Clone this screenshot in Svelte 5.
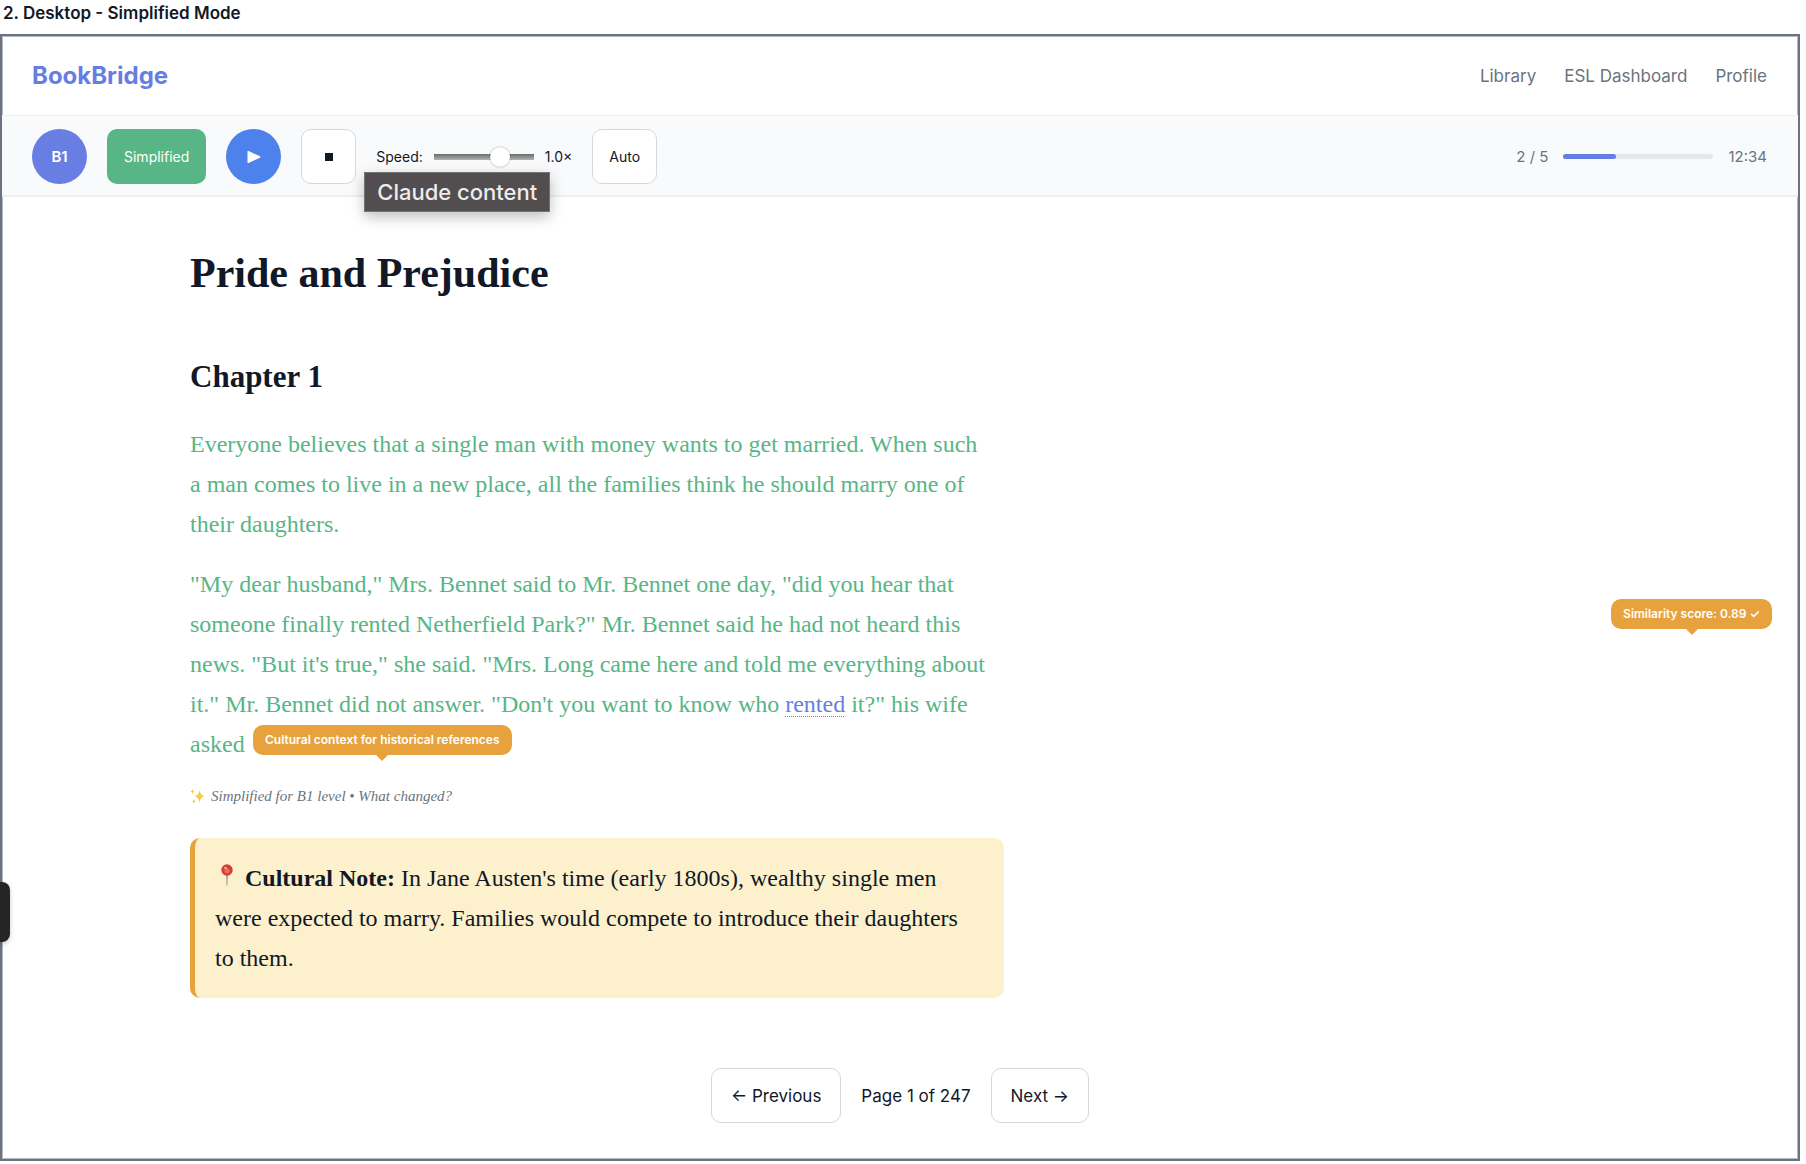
<script>
  let speed = $state(70);
  const progress = 35;
  const links = ['Library', 'ESL Dashboard', 'Profile'];
</script>

<main>
  <h2 class="caption">2. Desktop - Simplified Mode</h2>

  <div class="frame">
    <header>
      <div class="logo">BookBridge</div>
      <nav>
        {#each links as link}
          <a href="#{link}">{link}</a>
        {/each}
      </nav>
    </header>

    <div class="toolbar">
      <button class="round level">B1</button>
      <button class="mode">Simplified</button>
      <button class="round play" aria-label="Play">
        <svg width="14" height="14" viewBox="0 0 14 14"><path d="M.5 1.6v10.8q0 1 1 .6l11.500-5.300q1-.7 0-1.400L1.500 1Q.5.600.5 1.600z" fill="#fff" /></svg>
      </button>
      <button class="plain stop" aria-label="Stop">
        <svg width="8" height="8" viewBox="0 0 8 8"><rect width="8" height="8" fill="#111827" /></svg>
      </button>
      <div class="speed">
        <label for="speed">Speed:</label>
        <input id="speed" type="range" min="0" max="100" bind:value={speed} />
        <span>1.0×</span>
        <div class="hint" role="tooltip">Claude content</div>
      </div>
      <button class="plain auto">Auto</button>
      <div class="status">
        <span>2 / 5</span>
        <div class="track"><div class="fill" style="width: {progress}%"></div></div>
        <span>12:34</span>
      </div>
    </div>

    <div class="content">
      <article>
        <h1>Pride and Prejudice</h1>
        <h2>Chapter 1</h2>
        <p>
          Everyone believes that a single man with money wants to get married. When such<br />
          a man comes to live in a new place, all the families think he should marry one of<br />
          their daughters.
        </p>
        <p>
          "My dear husband," Mrs. Bennet said to Mr. Bennet one day, "did you hear that<br />
          someone finally rented Netherfield Park?" Mr. Bennet said he had not heard this<br />
          news. "But it's true," she said. "Mrs. Long came here and told me everything about<br />
          it." Mr. Bennet did not answer. "Don't you want to know who <span class="word">rented</span> it?" his wife<br />
          <span class="anchor">asked <span class="tip context">Cultural context for historical references</span></span>
        </p>
        <div class="meta">
          <svg width="15" height="15" viewBox="0 0 15 15" fill="#f8c94e">
            <path d="M9.500 1q.7 5.300 5 6.300-4.300 1-5 6.300-.7-5.300-5-6.300 4.300-1 5-6.300z" />
            <path d="M2.500 0q.3 2.200 2 2.600-1.700.4-2 2.600-.3-2.200-2-2.600 1.700-.4 2-2.600z" />
            <path d="M4 10q.3 2 1.800 2.400-1.500.4-1.800 2.400-.3-2-1.800-2.400Q3.700 12 4 10z" />
          </svg>
          <span>Simplified for B1 level • What changed?</span>
        </div>
        <aside>
          <svg width="24" height="24" viewBox="0 0 24 24">
            <path d="M11.300 11h1.400l-.4 12.500h-.6z" fill="#7d7f80" />
            <circle cx="12" cy="8" r="5.700" fill="#d63c36" />
            <circle cx="12" cy="8.800" r="2.600" fill="#ee6a61" />
            <ellipse cx="10.500" cy="6" rx="1.600" ry="1.100" fill="#f5aaa2" />
          </svg>
          <strong>Cultural Note:</strong> In Jane Austen's time (early 1800s), wealthy single men<br />
          were expected to marry. Families would compete to introduce their daughters<br />
          to them.
        </aside>
      </article>
    </div>

    <footer>
      <button class="plain page">← Previous</button>
      <span>Page 1 of 247</span>
      <button class="plain page">Next →</button>
    </footer>

    <div class="tip score">Similarity score: 0.89 ✓</div>
    <div class="drawer"></div>
  </div>
</main>

<style>
  :global(body) {
    margin: 0;
    background: #fff;
  }
  main {
    padding: 0 6px 5px 0;
    font-family: Inter, 'Liberation Sans', sans-serif;
    color: #111827;
  }
  .caption {
    margin: 0;
    padding: 0 3px 8px;
    font-size: 17px;
    line-height: 26px;
    font-weight: 600;
  }
  .frame {
    position: relative;
    border: 2px solid #6b7280;
    box-shadow: inset 0 0 0 1px #b5b9c1;
  }
  header {
    display: flex;
    align-items: center;
    justify-content: space-between;
    padding: 20px 31px 19px 30px;
  }
  .logo {
    font-size: 24px;
    line-height: 40px;
    font-weight: 700;
    color: #667ee3;
  }
  nav {
    display: flex;
    gap: 28px;
  }
  nav a {
    font-size: 17px;
    color: #6b7280;
    text-decoration: none;
  }
  .toolbar {
    display: flex;
    align-items: center;
    gap: 20px;
    padding: 13px 31px 11px 30px;
    background: #f9fafc;
    border-top: 1px solid #eceef1;
    border-bottom: 2px solid #eceef1;
    font-size: 14px;
  }
  button {
    display: flex;
    align-items: center;
    justify-content: center;
    box-sizing: border-box;
    height: 55px;
    padding: 0;
    border: 0;
    border-radius: 10px;
    font: inherit;
    color: inherit;
  }
  .round {
    width: 55px;
    border-radius: 50%;
    color: #fff;
  }
  .level {
    background: #687ee2;
    font-size: 15px;
    font-weight: 600;
  }
  .mode {
    padding: 0 17px;
    background: #57b586;
    color: #fff;
  }
  .play {
    background: #4d82ec;
  }
  .plain {
    background: #fff;
    border: 1px solid #d5d8dd;
  }
  .stop {
    width: 55px;
  }
  .auto {
    padding: 0 16px;
  }
  .speed {
    position: relative;
    display: flex;
    align-items: center;
    gap: 11px;
  }
  input {
    appearance: none;
    width: 100px;
    height: 6px;
    margin: 0;
    background: linear-gradient(#6a6e6b, #b1b4b3);
  }
  input::-webkit-slider-thumb {
    appearance: none;
    width: 20px;
    height: 20px;
    border-radius: 50%;
    background: #fff;
    box-shadow: 0 0 2px rgba(0, 0, 0, 0.4);
  }
  .hint {
    position: absolute;
    left: -12px;
    top: 24px;
    padding: 0 12px;
    border: 1px solid #757373;
    background: #524e4f;
    color: #ececec;
    font-size: 22px;
    line-height: 38px;
    font-weight: 500;
    white-space: nowrap;
    box-shadow: 0 5px 14px rgba(0, 0, 0, 0.25);
    z-index: 2;
  }
  .status {
    display: flex;
    align-items: center;
    gap: 15px;
    margin-left: auto;
    font-size: 15px;
    color: #6b7280;
  }
  .track {
    width: 150px;
    height: 5px;
    border-radius: 3px;
    background: #e5e7eb;
  }
  .fill {
    height: 5px;
    border-radius: 3px;
    background: #667ee3;
  }
  .content {
    max-width: 1420px;
    margin: 0 auto;
    padding: 50px 30px 0;
  }
  article {
    max-width: 814px;
    font-family: 'Liberation Serif', serif;
    font-size: 24px;
    line-height: 40px;
  }
  h1 {
    margin: 0 0 53px;
    font-size: 42px;
    line-height: 52px;
  }
  article h2 {
    margin: 0 0 22px;
    font-size: 31px;
    line-height: 50px;
  }
  p {
    margin: 0 0 20px;
    color: #57b586;
  }
  .word {
    color: #667ee3;
    text-decoration: underline dotted 1px;
    text-underline-offset: 4px;
  }
  .anchor {
    position: relative;
  }
  .tip {
    position: absolute;
    padding: 0 12px;
    border-radius: 10px;
    background: #e8a23d;
    color: #fff;
    font-family: Inter, 'Liberation Sans', sans-serif;
    font-size: 12px;
    line-height: 30px;
    font-weight: 600;
    white-space: nowrap;
  }
  .tip::after {
    content: '';
    position: absolute;
    top: 100%;
    left: 50%;
    margin-left: -6px;
    border: 6px solid transparent;
    border-top-color: #e8a23d;
    border-bottom: 0;
  }
  .context {
    left: 63px;
    top: -6px;
  }
  .score {
    right: 26px;
    top: 563px;
  }
  .meta {
    display: flex;
    align-items: center;
    gap: 6px;
    margin-bottom: 30px;
    font-size: 15px;
    line-height: 24px;
    font-style: italic;
    color: #6b7280;
  }
  aside {
    padding: 20px;
    border-left: 5px solid #e8a23d;
    border-radius: 10px;
    background: #fcf1cc;
  }
  footer {
    display: flex;
    align-items: center;
    justify-content: center;
    gap: 20px;
    padding: 70px 30px 36px;
    font-size: 17px;
  }
  .page {
    padding: 0 19px;
  }
  .drawer {
    position: absolute;
    left: -2px;
    top: 846px;
    width: 10px;
    height: 60px;
    border-radius: 0 8px 8px 0;
    background: #252523;
    box-shadow: 0 2px 5px rgba(0, 0, 0, 0.2);
  }
</style>
